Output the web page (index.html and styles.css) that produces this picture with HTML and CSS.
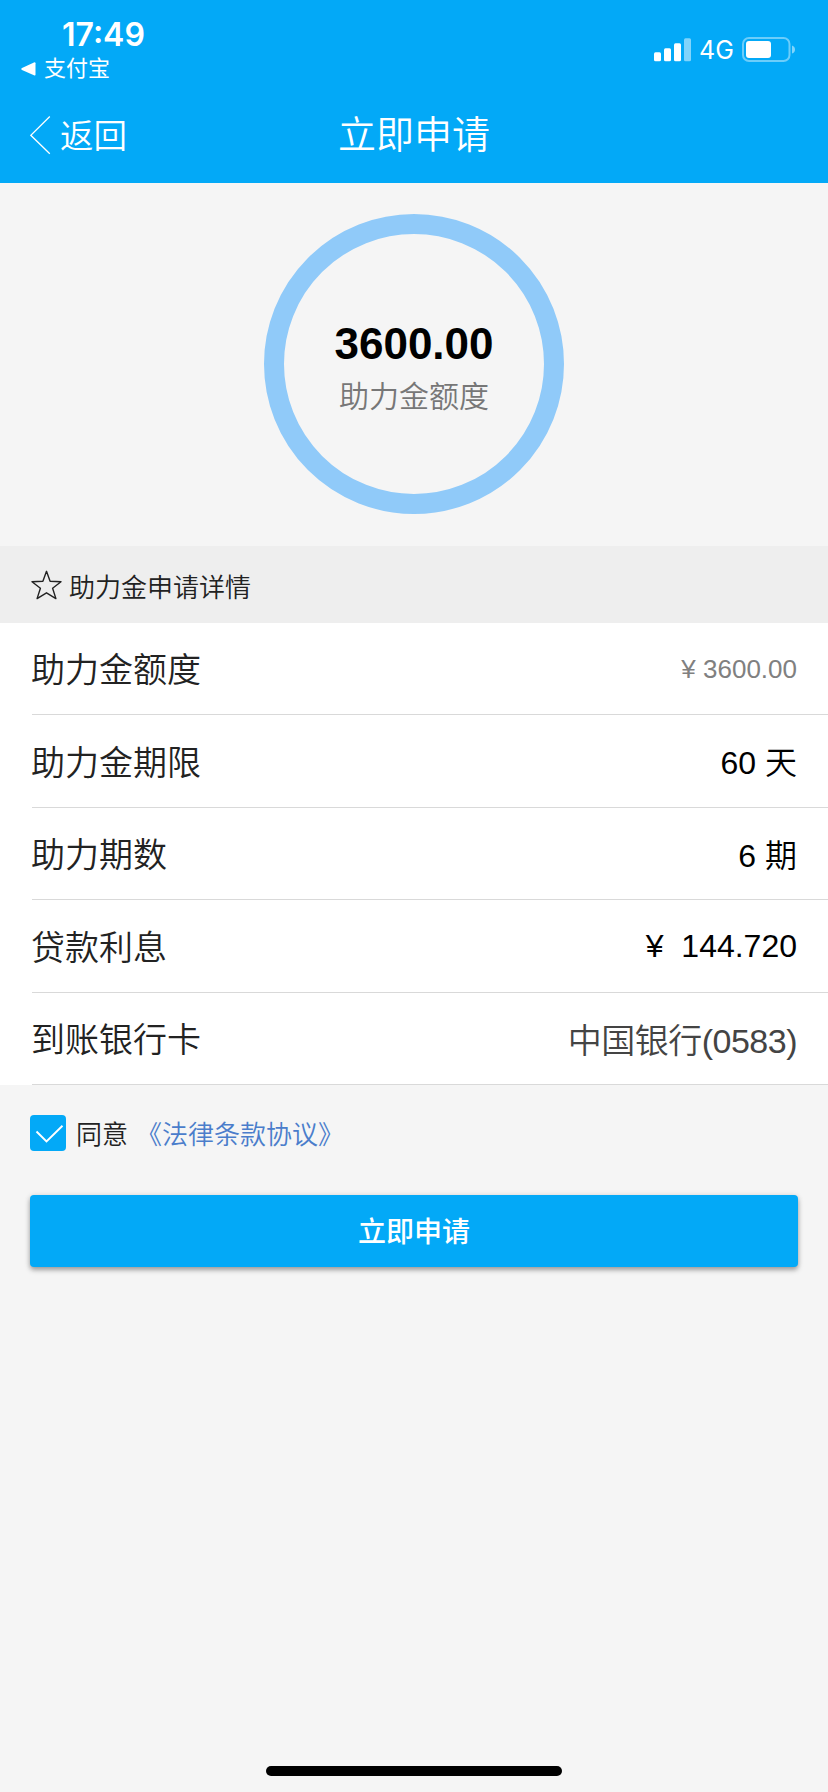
FILE: index.html
```html
<!DOCTYPE html>
<html lang="zh-CN">
<head>
<meta charset="utf-8">
<title>立即申请</title>
<link rel="stylesheet" href="styles.css">
</head>
<body>
<div class="screen">
  <header class="header">
    <div class="status">
      <div class="status-left">
        <div class="time">17:49</div>
        <div class="return-app">
          <svg width="15" height="14" viewBox="0 0 15 14"><path d="M13.5 0.3Q14.5 0.3 14.5 1.3V12.7Q14.5 13.7 13.5 13.5L1 8Q-.5 7 1 6Z" fill="#fff"/></svg>
          <span>支付宝</span>
        </div>
      </div>
      <div class="status-right">
        <svg class="signal" width="38" height="24" viewBox="0 0 38 24" fill="#fff"><rect x="0" y="14.3" width="7" height="9" rx="1.5"/><rect x="10" y="10.3" width="7" height="13" rx="1.5"/><rect x="20" y="5.3" width="7" height="18" rx="1.5"/><rect x="30" y="0.3" width="7" height="23" rx="1.5" opacity=".5"/></svg>
        <span class="network">4G</span>
        <svg class="battery" width="54" height="26" viewBox="0 0 54 26"><rect x="1" y="1" width="46.5" height="23" rx="6" fill="none" stroke="#fff" stroke-opacity=".42" stroke-width="2"/><rect x="4" y="4" width="25" height="17" rx="3" fill="#fff"/><path d="M50 8.5Q53 9.5 53 12.5T50 16.5Z" fill="#fff" opacity=".5"/></svg>
      </div>
    </div>
    <nav class="nav">
      <a class="back"><svg width="22" height="40" viewBox="0 0 22 40"><path d="M19.8 .5 .8 19.3 19.8 37.8" fill="none" stroke="#fff" stroke-width="1.3"/></svg><span class="back-text">返回</span></a>
      <h1 class="title">立即申请</h1>
    </nav>
  </header>
  <section class="summary">
    <div class="ring">
      <div class="ring-amount">3600.00</div>
      <div class="ring-label">助力金额度</div>
    </div>
  </section>
  <h2 class="section-head">
    <svg width="32" height="30" viewBox="0 0 32 30"><path d="M15.5 1.3 19.1 11.3 30 11.7 21.6 18.2 24.9 28.6 15.5 22.8 6.1 28.6 9.4 18.2 1 11.7 11.9 11.3Z" fill="none" stroke="#222" stroke-width="1.4" stroke-linejoin="round"/></svg>
    <span>助力金申请详情</span>
  </h2>
  <div class="list">
    <div class="row"><span class="label">助力金额度</span><span class="value small">¥ 3600.00</span></div>
    <div class="row"><span class="label">助力金期限</span><span class="value unit">60 天</span></div>
    <div class="row"><span class="label">助力期数</span><span class="value unit">6 期</span></div>
    <div class="row"><span class="label">贷款利息</span><span class="value interest">¥&nbsp; 144.720</span></div>
    <div class="row"><span class="label">到账银行卡</span><span class="value bank">中国银行(0583)</span></div>
  </div>
  <div class="agree">
    <svg class="check" width="36" height="36" viewBox="0 0 36 36"><rect width="36" height="36" rx="4" fill="#03a9f7"/><path d="M6.5 16.5 16.5 26.5 32.5 10.8" fill="none" stroke="#fff" stroke-width="1.9"/></svg>
    <span class="agree-text">同意</span>
    <a class="terms">《法律条款协议》</a>
  </div>
  <button class="submit">立即申请</button>
  <div class="home-bar"></div>
</div>
</body>
</html>
```
FILE: styles.css
```css
* { box-sizing: border-box; }
body {
  margin: 0;
  background: #f5f5f5;
  font-family: "Liberation Sans", "Noto Sans CJK SC", sans-serif;
  font-weight: 350;
  color: #222;
}
svg { display: block; flex: none; }
.screen {
  width: 828px;
  height: 1792px;
  display: flex;
  flex-direction: column;
  overflow: hidden;
}
.header { height: 183px; background: #03a9f7; color: #fff; flex: none; }
.status { height: 88px; display: flex; justify-content: space-between; padding: 15px 32px 0 21px; }
.status-left { display: flex; flex-direction: column; }
.time { font: 600 32px/40px Inter, sans-serif; padding-left: 41px; }
.return-app { display: flex; align-items: center; gap: 8px; font-size: 22px; font-weight: 400; line-height: 27px; }
.status-right { display: flex; align-items: center; height: 40px; margin-top: 15px; }
.network { font: 400 25px/30px Inter, sans-serif; margin-left: 7px; width: 36px; white-space: nowrap; }
.battery { margin-left: 7px; }
.nav {
  height: 95px;
  display: grid;
  grid-template-columns: 1fr auto 1fr;
  align-items: center;
  padding: 0 30px;
}
.back { display: flex; align-items: center; gap: 8px; font-size: 33.5px; line-height: 50px; }
.back-text { padding-top: 2px; }
.title { margin: 0; font-size: 38px; font-weight: 350; line-height: 50px; padding-bottom: 2px; }
.summary { height: 363px; padding-top: 31px; display: flex; justify-content: center; flex: none; }
.ring {
  width: 300px;
  height: 300px;
  border: 20px solid #90caf9;
  border-radius: 50%;
  display: flex;
  flex-direction: column;
  align-items: center;
  padding-top: 85px;
}
.ring-amount { font-size: 44px; font-weight: 700; line-height: 50px; color: #000; }
.ring-label { font-size: 30px; line-height: 46px; margin-top: 5px; color: #777; }
.section-head {
  margin: 0;
  height: 77px;
  flex: none;
  display: flex;
  align-items: center;
  gap: 6px;
  padding: 1px 0 0 31px;
  background: #eee;
  font-size: 26px;
  font-weight: 350;
}
.list { background: #fff; height: 462px; flex: none; display: grid; grid-template-rows: 92px 93px 92px 93px 92px; padding-left: 32px; }
.row {
  display: flex;
  align-items: center;
  justify-content: space-between;
  padding-right: 31px;
  border-bottom: 1px solid #d9d9d9;
}
.label { font-size: 34px; margin-left: -1px; padding-bottom: 2px; }
.value { font-size: 32px; color: #000; }
.value.small { font-size: 26px; color: #808080; padding-top: 1px; }
.value.unit { padding-bottom: 2px; }
.value.interest { padding-top: 1px; }
.value.bank { font-size: 34px; color: #444; letter-spacing: -.5px; padding-bottom: 1px; }
.agree { margin-top: 30px; padding-left: 30px; height: 36px; flex: none; display: flex; align-items: center; font-size: 26px; }
.agree-text, .terms { padding-bottom: 2px; }
.agree-text { margin-left: 10px; }
.terms { margin-left: 8px; color: #4a7dcb; }
.submit {
  margin: 44px 30px 0;
  height: 72px;
  flex: none;
  border: 0;
  border-radius: 4px;
  background: #03a9f7;
  color: #fff;
  font-family: inherit;
  font-size: 28px;
  font-weight: 500;
  padding: 0 0 3px;
  box-shadow: 0 3px 5px rgba(0, 0, 0, .34), 0 0 6px rgba(0, 0, 0, .08);
}
.home-bar { width: 296px; height: 10px; border-radius: 5px; background: #000; margin: auto auto 16px; }
```
